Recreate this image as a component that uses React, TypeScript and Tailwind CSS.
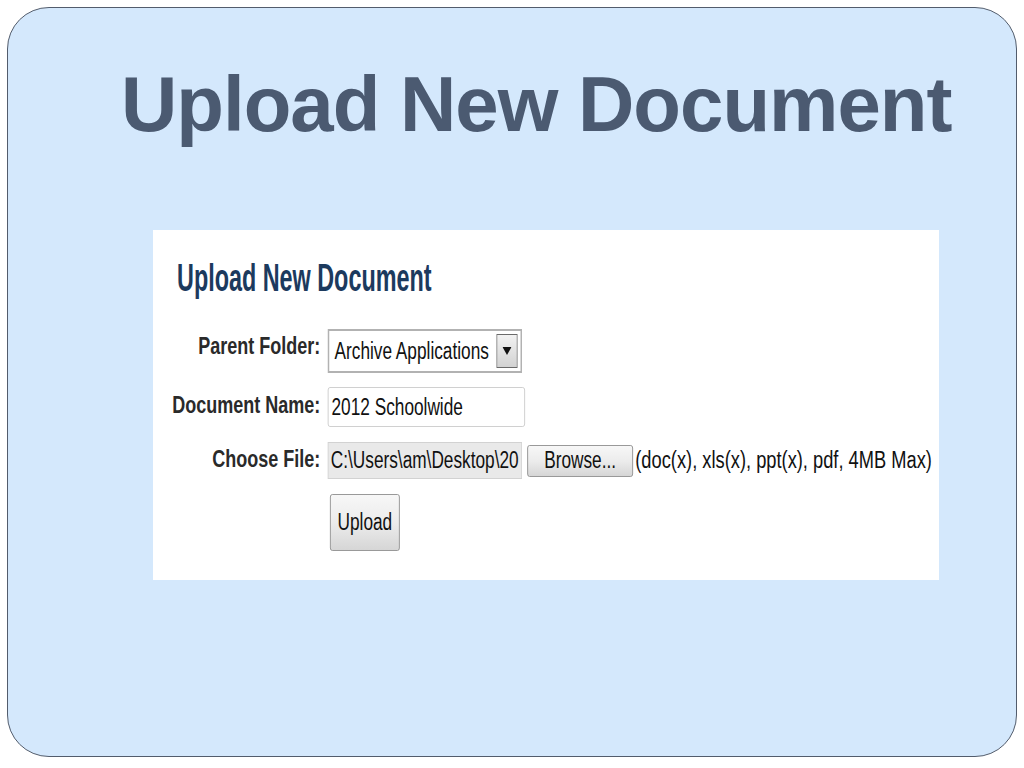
import { FC, ReactNode } from "react";

const sans = "font-['Liberation_Sans',Arial,sans-serif]";

const Label: FC<{ children: ReactNode; className?: string }> = ({
  children,
  className,
}) => (
  <div
    className={`w-[223px] shrink-0 text-right text-[24px] leading-none font-bold text-[#2a2a2a] ${className ?? ""}`}
  >
    {children}
  </div>
);

const GrayButton: FC<{ children: ReactNode; className?: string }> = ({
  children,
  className,
}) => (
  <button
    className={`flex items-center justify-center rounded-[3px] border border-[#8a8a8a] bg-gradient-to-b from-[#f7f7f7] via-[#ececec] to-[#d6d6d6] text-[23px] leading-none text-[#111] ${className}`}
  >
    {children}
  </button>
);

export default function App() {
  return (
    <div className={`w-[1024px] h-[768px] bg-white pt-[7px] pl-[7px] ${sans}`}>
      <div className="w-[1010px] h-[750px] rounded-[42px] border border-[#525c6c] bg-[#d4e8fc] pt-[57px]">
        <h1 className="ml-[113px] text-[78px] leading-none font-bold tracking-[-1px] text-[#4b5a71]">
          Upload New Document
        </h1>

        <div className="ml-[145px] mt-[87px] w-[786px] h-[350px] bg-white overflow-hidden">
          {/* the form in the picture is squeezed sideways */}
          <div className="w-[1048px] origin-top-left scale-x-[0.75] pt-[29px]">
            <h2 className="ml-[32px] inline-block origin-left scale-x-[0.82] text-[38px] leading-none font-bold text-[#1c3a5e]">
              Upload New Document
            </h2>

            <div className="mt-[31px] flex h-[44px] items-center">
              <Label className="mb-[10px]">Parent Folder:</Label>
              <div className="ml-[10px] flex h-[44px] w-[259px] items-center justify-between border-2 border-[#b2b2b2] bg-white pl-[7px] pr-[4px]">
                <span className="text-[23px] leading-none text-[#111]">
                  Archive Applications
                </span>
                <span className="flex h-[34px] w-[28px] items-center justify-center border border-[#6a6a6a] bg-gradient-to-b from-[#f2f2f2] to-[#d2d2d2]">
                  <svg width="12" height="8" viewBox="0 0 12 8">
                    <polygon points="0,0 12,0 6,8" fill="#111" />
                  </svg>
                </span>
              </div>
            </div>

            <div className="mt-[14px] flex h-[40px] items-center">
              <Label className="mb-[4px]">Document Name:</Label>
              <div className="ml-[10px] flex h-[40px] w-[263px] items-center rounded-[3px] border border-[#c9c9c9] bg-white pl-[4px] text-[23px] leading-none text-[#111]">
                2012 Schoolwide
              </div>
            </div>

            <div className="mt-[15px] flex h-[37px] items-center">
              <Label className="mb-[4px]">Choose File:</Label>
              <div className="ml-[10px] flex h-[37px] w-[259px] items-center overflow-hidden border border-[#d2d2d2] bg-[#e9e9e9] pl-[3px] text-[23px] leading-none whitespace-nowrap text-[#111]">
                C:\Users\am\Desktop\20
              </div>
              <GrayButton className="ml-[7px] h-[32px] w-[141px]">Browse...</GrayButton>
              <span className="ml-[3px] inline-block origin-left scale-x-[1.06] text-[23px] leading-none whitespace-nowrap text-[#111]">
                (doc(x), xls(x), ppt(x), pdf, 4MB Max)
              </span>
            </div>

            <div className="mt-[15px] flex">
              <GrayButton className="ml-[236px] h-[57px] w-[93px]">Upload</GrayButton>
            </div>
          </div>
        </div>
      </div>
    </div>
  );
}
